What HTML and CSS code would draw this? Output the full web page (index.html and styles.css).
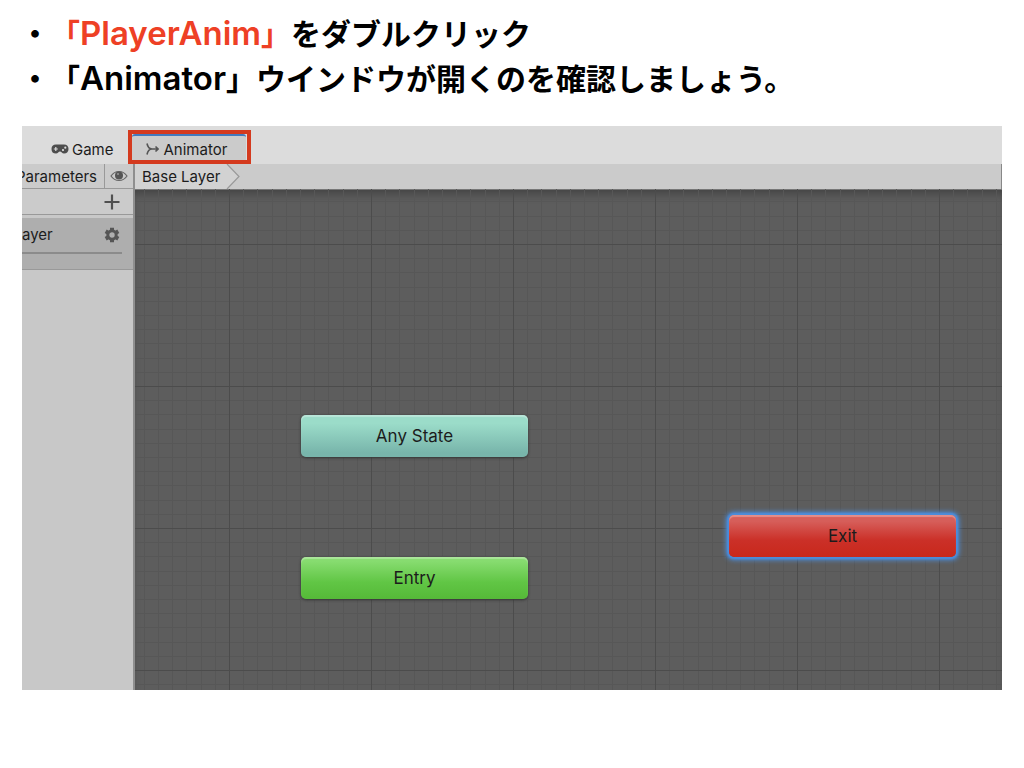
FILE: index.html
```html
<!DOCTYPE html>
<html lang="ja">
<head>
  <meta charset="UTF-8" />
  <meta name="viewport" content="width=device-width, initial-scale=1.0" />
  <title>PlayerAnim / Animator</title>
  <link rel="stylesheet" href="styles.css">
</head>
<body>
  <ul class="steps">
    <li><span class="highlight">「<span class="latin">PlayerAnim</span>」</span>をダブルクリック</li>
    <li><span>「<span class="latin">Animator</span>」ウインドウが開くのを確認しましょう。</span></li>
  </ul>

  <main class="editor">
    <nav class="tabs">
      <button class="tab">
        <svg width="18" height="10" viewBox="0 0 18 10">
          <path fill="#4d4d4d" fill-rule="evenodd" d="M5 0.500H13C16 0.500 17.500 2.300 17.500 5S16 9.500 13 9.500C11 9.500 10.500 7.500 9 7.500S7 9.500 5 9.500C2 9.500 .5 8 .5 5S2 .5 5 .5ZM4.200 3V4.400H2.800V5.600H4.200V7H5.400V5.600H6.800V4.400H5.400V3ZM12 5A1.100 1.100 0 1 0 12 7.200A1.100 1.100 0 1 0 12 5ZM14.300 2.600A1.100 1.100 0 1 0 14.300 4.800A1.100 1.100 0 1 0 14.300 2.600Z"/>
        </svg>
        Game
      </button>
      <div class="marker">
        <button class="tab active">
          <svg width="13" height="12" viewBox="0 0 13 12" fill="none" stroke="#555" stroke-width="1.600">
            <path d="M1 .5C1.500 3 3 6 6 6H12M1 11.500C1.500 9 3 6 6 6M9.500 3.500L12 6L9.500 8.500"/>
          </svg>
          Animator
        </button>
      </div>
    </nav>

    <div class="panes">
      <aside class="sidebar">
        <div class="side-head">
          <button class="params">Parameters</button>
          <button class="eye" aria-label="Visibility">
            <svg width="18" height="12" viewBox="0 0 18 12">
              <path d="M1 6C5 0 13 0 17 6C13 12 5 12 1 6Z" fill="none" stroke="#666" stroke-width="1.200"/>
              <circle cx="9" cy="5.500" r="4" fill="#555"/>
              <circle cx="8" cy="4" r="1" fill="#999"/>
            </svg>
          </button>
        </div>
        <div class="side-tools">
          <button aria-label="Add layer">
            <svg width="16" height="16" viewBox="0 0 16 16" stroke="#505050" stroke-width="2.200">
              <path d="M8 .5V15.500M.5 8H15.500"/>
            </svg>
          </button>
        </div>
        <div class="layer">
          <div class="layer-row">
            <span>ayer</span>
            <button aria-label="Layer settings">
              <svg width="16" height="16" viewBox="0 0 16 16">
                <g fill="none" stroke="#555">
                  <circle cx="8" cy="8" r="4.200" stroke-width="3"/>
                  <path stroke-width="4" d="M8 .7V3M8 13V15.300M1.700 4.350L3.700 5.500M12.300 10.500L14.300 11.650M1.700 11.650L3.700 10.500M12.300 5.500L14.300 4.350"/>
                </g>
              </svg>
            </button>
          </div>
          <div class="weight"></div>
        </div>
      </aside>

      <section class="graph">
        <div class="crumbs">
          <button class="crumb">Base Layer</button>
          <svg width="14" height="25" viewBox="0 0 14 25">
            <path d="M0 0H1L13 12.500L1 25H0Z" fill="#d2d2d2"/>
            <path d="M1 0L13 12.500L1 25" fill="none" stroke="#999" stroke-width="1.200"/>
          </svg>
        </div>
        <div class="canvas">
          <svg class="grid" width="100%" height="100%">
            <defs>
              <pattern id="grid" x="94" y="55" width="142" height="142" patternUnits="userSpaceOnUse">
                <path stroke="#575757" d="M14.500 0V142M28.500 0V142M43.500 0V142M57.500 0V142M71.500 0V142M85.500 0V142M99.500 0V142M114.500 0V142M128.500 0V142M0 14.500H142M0 28.500H142M0 43.500H142M0 57.500H142M0 71.500H142M0 85.500H142M0 99.500H142M0 114.500H142M0 128.500H142"/>
                <path stroke="#4c4c4c" d="M.5 0V142M0 .5H142"/>
              </pattern>
            </defs>
            <rect width="100%" height="100%" fill="url(#grid)"/>
          </svg>
          <button class="node any">Any State</button>
          <button class="node entry">Entry</button>
          <button class="node exit">Exit</button>
        </div>
      </section>
    </div>
  </main>
</body>
</html>
```
FILE: styles.css
```css
* {
  box-sizing: border-box;
}
body {
  margin: 0;
  padding: 12px 22px;
  background-color: #fff;
  color: #000;
  font-family: Inter, "Noto Sans CJK JP", sans-serif;
}
button {
  margin: 0;
  padding: 0;
  border: none;
  background: none;
  color: #1c1c1c;
  font-family: inherit;
  font-size: 15px;
}
svg {
  display: block;
  flex: none;
}
.steps {
  list-style: none;
  margin: 0;
  padding: 0;
  font-size: 30px;
  font-weight: 600;
  line-height: 45px;
}
.steps li {
  display: flex;
  height: 45px;
}
.steps li::before {
  content: "・";
  margin-left: -2px;
}
.latin {
  font-size: 33px;
  line-height: 1;
}
.highlight {
  color: #ee4025;
}
.editor {
  margin-top: 24px;
  color: #1c1c1c;
  font-size: 15px;
}
.tabs {
  display: flex;
  align-items: flex-end;
  height: 38px;
  padding-left: 29px;
  background-color: #dcdcdc;
}
.tab {
  display: flex;
  align-items: center;
  gap: 3px;
  height: 30px;
}
.marker {
  margin-left: 14px;
  border: 4px solid #d43a1e;
  padding-right: 1px;
}
.tab.active {
  height: 26px;
  padding: 2px 19px 0 14px;
  gap: 5px;
  border-top: 2px solid #4279bd;
  border-radius: 3px 3px 0 0;
  background-color: #cbcbcb;
}
.panes {
  display: flex;
  min-height: 526px;
}
.sidebar {
  flex: none;
  width: 113px;
  border-right: 2px solid #8f8f8f;
  background-color: #c8c8c8;
}
.side-head {
  display: flex;
  height: 25px;
  border-bottom: 1px solid #999;
  background-color: #cbcbcb;
}
.params {
  display: flex;
  justify-content: flex-end;
  align-items: center;
  width: 83px;
  padding-right: 7px;
  border-right: 1px solid #999;
  overflow: hidden;
}
.eye {
  flex: 1;
  display: flex;
  align-items: center;
  justify-content: center;
}
.side-tools {
  display: flex;
  justify-content: flex-end;
  align-items: center;
  height: 26px;
  padding-right: 13px;
  border-bottom: 1px solid #999;
  background-color: #cbcbcb;
}
.layer {
  height: 52px;
  margin-top: 3px;
  border-bottom: 1px solid #999;
  background-color: #aeaeae;
}
.layer-row {
  display: flex;
  justify-content: space-between;
  align-items: center;
  height: 33px;
  padding-right: 13px;
}
.weight {
  height: 2px;
  margin-top: 1px;
  margin-right: 11px;
  background-color: #8b8b8b;
}
.graph {
  flex: 1;
  display: flex;
  flex-direction: column;
}
.crumbs {
  display: flex;
  height: 25px;
  border-right: 1px solid #888;
  background-color: #cbcbcb;
}
.crumb {
  padding: 0 6px 0 7px;
  background-color: #d2d2d2;
}
.canvas {
  position: relative;
  flex: 1;
  background-color: #5d5d5d;
  box-shadow: inset 0 1px #777, inset 0 9px 8px -4px #444;
}
.grid {
  position: absolute;
  inset: 0;
}
.node {
  position: absolute;
  width: 227px;
  height: 42px;
  border-radius: 5px;
  font-size: 17px;
  box-shadow: 0 1px 3px #333, inset 0 2px 1px rgba(255,255,255,0.3);
}
.any {
  left: 166px;
  top: 226px;
  background: linear-gradient(#9bdcc9 20%, #78b5ab 90%);
}
.entry {
  left: 166px;
  top: 368px;
  background: linear-gradient(#87dc70 10%, #61c645 60%, #55b938);
}
.exit {
  left: 594px;
  top: 326px;
  background: linear-gradient(#d65e5a 15%, #cb3028 60%, #c8281b);
  box-shadow: 0 0 2px 2px #4b8ddc, 0 0 5px 3px #4b8ddc, inset 0 2px 1px rgba(255,255,255,0.3);
}
```
